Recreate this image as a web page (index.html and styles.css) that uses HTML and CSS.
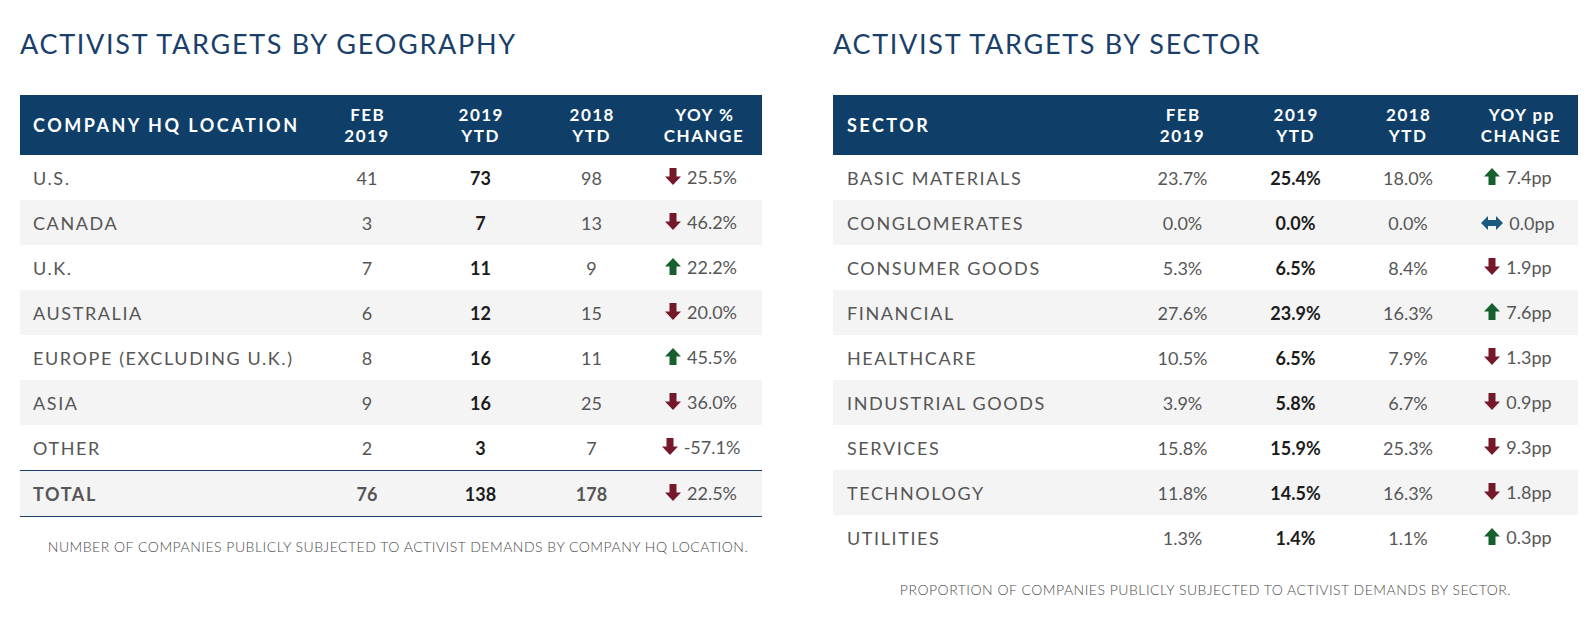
FILE: index.html
```html
<!DOCTYPE html>
<html lang="en">
<head>
<meta charset="utf-8">
<title>Activist Targets</title>
<link rel="stylesheet" href="styles.css">
</head>
<body>
<main class="page">
  <section class="panel panel-geo">
    <h2 class="title">ACTIVIST TARGETS BY GEOGRAPHY</h2>
    <table class="data">
      <colgroup>
        <col class="c-name"><col class="c-a"><col class="c-b"><col class="c-c"><col class="c-d">
      </colgroup>
      <thead>
        <tr><th class="name">COMPANY HQ LOCATION</th><th>FEB<br>2019</th><th>2019<br>YTD</th><th>2018<br>YTD</th><th class="chg">YOY %<br>CHANGE</th></tr>
      </thead>
      <tbody>
        <tr><td class="name">U.S.</td><td>41</td><td class="strong">73</td><td>98</td><td class="chg"><span class="delta"><svg class="arrow down" viewBox="0 0 16 17"><path d="M4.5 0h7v8.5H16L8 17 0 8.5h4.5z"/></svg>25.5%</span></td></tr>
        <tr><td class="name">CANADA</td><td>3</td><td class="strong">7</td><td>13</td><td class="chg"><span class="delta"><svg class="arrow down" viewBox="0 0 16 17"><path d="M4.5 0h7v8.5H16L8 17 0 8.5h4.5z"/></svg>46.2%</span></td></tr>
        <tr><td class="name">U.K.</td><td>7</td><td class="strong">11</td><td>9</td><td class="chg"><span class="delta"><svg class="arrow up" viewBox="0 0 16 17"><path d="M8 0l8 8.5h-4.5V17h-7V8.5H0z"/></svg>22.2%</span></td></tr>
        <tr><td class="name">AUSTRALIA</td><td>6</td><td class="strong">12</td><td>15</td><td class="chg"><span class="delta"><svg class="arrow down" viewBox="0 0 16 17"><path d="M4.5 0h7v8.5H16L8 17 0 8.5h4.5z"/></svg>20.0%</span></td></tr>
        <tr><td class="name">EUROPE (EXCLUDING U.K.)</td><td>8</td><td class="strong">16</td><td>11</td><td class="chg"><span class="delta"><svg class="arrow up" viewBox="0 0 16 17"><path d="M8 0l8 8.5h-4.5V17h-7V8.5H0z"/></svg>45.5%</span></td></tr>
        <tr><td class="name">ASIA</td><td>9</td><td class="strong">16</td><td>25</td><td class="chg"><span class="delta"><svg class="arrow down" viewBox="0 0 16 17"><path d="M4.5 0h7v8.5H16L8 17 0 8.5h4.5z"/></svg>36.0%</span></td></tr>
        <tr><td class="name">OTHER</td><td>2</td><td class="strong">3</td><td>7</td><td class="chg"><span class="delta"><svg class="arrow down" viewBox="0 0 16 17"><path d="M4.5 0h7v8.5H16L8 17 0 8.5h4.5z"/></svg>-57.1%</span></td></tr>
        <tr class="total"><td class="name">TOTAL</td><td>76</td><td class="strong">138</td><td>178</td><td class="chg"><span class="delta"><svg class="arrow down" viewBox="0 0 16 17"><path d="M4.5 0h7v8.5H16L8 17 0 8.5h4.5z"/></svg>22.5%</span></td></tr>
      </tbody>
    </table>
    <p class="caption">NUMBER OF COMPANIES PUBLICLY SUBJECTED TO ACTIVIST DEMANDS BY COMPANY HQ LOCATION.</p>
  </section>

  <section class="panel panel-sector">
    <h2 class="title">ACTIVIST TARGETS BY SECTOR</h2>
    <table class="data">
      <colgroup>
        <col class="c-name"><col class="c-a"><col class="c-b"><col class="c-c"><col class="c-d">
      </colgroup>
      <thead>
        <tr><th class="name">SECTOR</th><th>FEB<br>2019</th><th>2019<br>YTD</th><th>2018<br>YTD</th><th class="chg">YOY pp<br>CHANGE</th></tr>
      </thead>
      <tbody>
        <tr><td class="name">BASIC MATERIALS</td><td>23.7%</td><td class="strong">25.4%</td><td>18.0%</td><td class="chg"><span class="delta"><svg class="arrow up" viewBox="0 0 16 17"><path d="M8 0l8 8.5h-4.5V17h-7V8.5H0z"/></svg>7.4pp</span></td></tr>
        <tr><td class="name">CONGLOMERATES</td><td>0.0%</td><td class="strong">0.0%</td><td>0.0%</td><td class="chg"><span class="delta"><svg class="arrow flat" viewBox="0 0 22 14"><path d="M0 7l7-7v4h8V0l7 7-7 7v-4H7v4z"/></svg>0.0pp</span></td></tr>
        <tr><td class="name">CONSUMER GOODS</td><td>5.3%</td><td class="strong">6.5%</td><td>8.4%</td><td class="chg"><span class="delta"><svg class="arrow down" viewBox="0 0 16 17"><path d="M4.5 0h7v8.5H16L8 17 0 8.5h4.5z"/></svg>1.9pp</span></td></tr>
        <tr><td class="name">FINANCIAL</td><td>27.6%</td><td class="strong">23.9%</td><td>16.3%</td><td class="chg"><span class="delta"><svg class="arrow up" viewBox="0 0 16 17"><path d="M8 0l8 8.5h-4.5V17h-7V8.5H0z"/></svg>7.6pp</span></td></tr>
        <tr><td class="name">HEALTHCARE</td><td>10.5%</td><td class="strong">6.5%</td><td>7.9%</td><td class="chg"><span class="delta"><svg class="arrow down" viewBox="0 0 16 17"><path d="M4.5 0h7v8.5H16L8 17 0 8.5h4.5z"/></svg>1.3pp</span></td></tr>
        <tr><td class="name">INDUSTRIAL GOODS</td><td>3.9%</td><td class="strong">5.8%</td><td>6.7%</td><td class="chg"><span class="delta"><svg class="arrow down" viewBox="0 0 16 17"><path d="M4.5 0h7v8.5H16L8 17 0 8.5h4.5z"/></svg>0.9pp</span></td></tr>
        <tr><td class="name">SERVICES</td><td>15.8%</td><td class="strong">15.9%</td><td>25.3%</td><td class="chg"><span class="delta"><svg class="arrow down" viewBox="0 0 16 17"><path d="M4.5 0h7v8.5H16L8 17 0 8.5h4.5z"/></svg>9.3pp</span></td></tr>
        <tr><td class="name">TECHNOLOGY</td><td>11.8%</td><td class="strong">14.5%</td><td>16.3%</td><td class="chg"><span class="delta"><svg class="arrow down" viewBox="0 0 16 17"><path d="M4.5 0h7v8.5H16L8 17 0 8.5h4.5z"/></svg>1.8pp</span></td></tr>
        <tr><td class="name">UTILITIES</td><td>1.3%</td><td class="strong">1.4%</td><td>1.1%</td><td class="chg"><span class="delta"><svg class="arrow up" viewBox="0 0 16 17"><path d="M8 0l8 8.5h-4.5V17h-7V8.5H0z"/></svg>0.3pp</span></td></tr>
      </tbody>
    </table>
    <p class="caption">PROPORTION OF COMPANIES PUBLICLY SUBJECTED TO ACTIVIST DEMANDS BY SECTOR.</p>
  </section>
</main>
</body>
</html>
```

FILE: styles.css
```css
html, body {
  margin: 0;
  padding: 0;
  background: #ffffff;
}

body {
  font-family: "Lato", "Open Sans", sans-serif;
  color: #555555;
}

.page {
  display: flex;
  align-items: flex-start;
  gap: 71px;
  padding: 28px 0 0 20px;
}

.panel-geo { width: 742px; }
.panel-sector { width: 745px; }

.title {
  margin: 0 0 35px 0;
  font-size: 27px;
  line-height: 32px;
  font-weight: 400;
  color: #1b3f6b;
  letter-spacing: 1.7px;
  white-space: nowrap;
}

.data {
  width: 100%;
  table-layout: fixed;
  border-collapse: collapse;
  border-spacing: 0;
}

.panel-geo .c-name { width: 290px; }
.panel-geo .c-a { width: 114px; }
.panel-geo .c-b { width: 113px; }
.panel-geo .c-c { width: 109px; }
.panel-geo .c-d { width: 116px; }

.panel-sector .c-name { width: 293px; }
.panel-sector .c-a { width: 113px; }
.panel-sector .c-b { width: 113px; }
.panel-sector .c-c { width: 112px; }
.panel-sector .c-d { width: 114px; }

.data thead th {
  background: #0f3f68;
  color: #ffffff;
  height: 60px;
  padding: 0;
  font-size: 17px;
  line-height: 21px;
  font-weight: 700;
  letter-spacing: 1.5px;
  text-indent: 1.5px;
  text-align: center;
  vertical-align: middle;
  white-space: nowrap;
}

.data thead th.name {
  text-align: left;
  text-indent: 0;
  padding-left: 13px;
  font-size: 18px;
  letter-spacing: 2.5px;
}

.panel-sector .data thead th.name,
.panel-sector .data td.name { padding-left: 14px; }

.data td {
  height: 45px;
  padding: 0;
  font-size: 18px;
  color: #565656;
  text-align: center;
  vertical-align: middle;
  white-space: nowrap;
}

.data td.name {
  text-align: left;
  padding-left: 13px;
  letter-spacing: 1.6px;
}

.data tbody tr:nth-child(even) td { background: #f4f4f4; }

.data td.strong {
  color: #1c1c1c;
  font-weight: 700;
}

.data tr.total td {
  background: #e2eef7;
  border-top: 1px solid #1b3f6b;
  border-bottom: 1px solid #1b3f6b;
  font-weight: 700;
}

.data tr.total td.chg { font-weight: 400; }

.data td.chg { padding-right: 6px; }

.delta {
  display: inline-flex;
  align-items: center;
  gap: 6px;
}

.arrow {
  width: 16px;
  height: 17px;
  flex: none;
}

.arrow.down { fill: #751829; }
.arrow.up { fill: #16602f; }
.arrow.flat {
  width: 22px;
  height: 14px;
  fill: #1a5a82;
}

.caption {
  margin: 21px 0 0 0;
  text-align: center;
  font-size: 14px;
  font-weight: 300;
  letter-spacing: 0.5px;
  color: #4a4a4a;
  white-space: nowrap;
}

.panel-geo .caption { padding-left: 14px; }
```
